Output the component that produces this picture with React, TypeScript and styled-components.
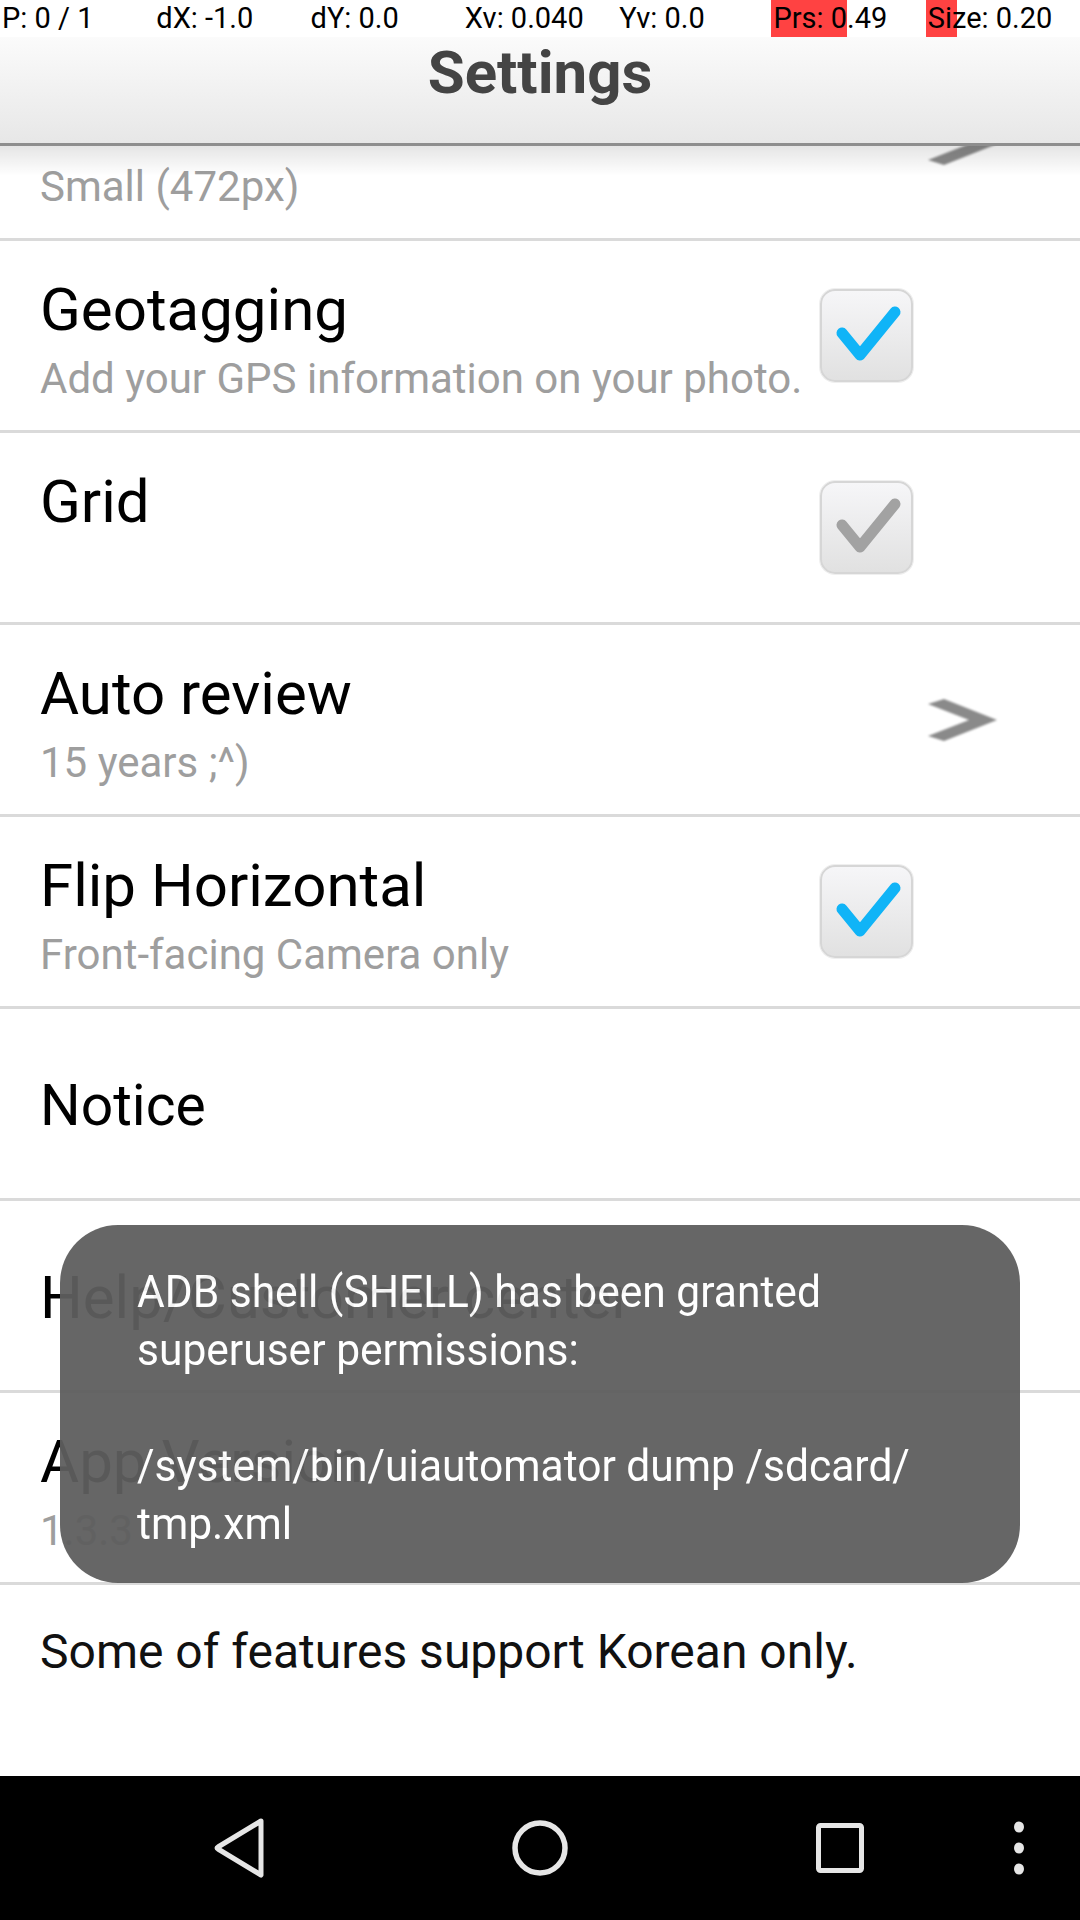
import React from "react";
import styled, { createGlobalStyle } from "styled-components";

const GlobalStyle = createGlobalStyle`
  html, body {
    margin: 0;
    padding: 0;
    background: #ffffff;
  }
  body {
    font-family: Roboto, "Noto Sans", "Liberation Sans", sans-serif;
    width: 1080px;
    height: 1920px;
    overflow: hidden;
  }
  #root {
    width: 1080px;
    height: 1920px;
  }
`;

const Phone = styled.div`
  position: relative;
  width: 1080px;
  height: 1920px;
  display: flex;
  flex-direction: column;
  background: #ffffff;
  overflow: hidden;
`;

/* ---------- debug pointer status line ---------- */
const StatusBar = styled.div`
  flex-shrink: 0;
  height: 37px;
  display: grid;
  grid-template-columns: repeat(7, 1fr);
  background: #ffffff;
`;

const StatusCell = styled.div`
  position: relative;
  height: 37px;
  padding-left: 2px;
  font-size: 29px;
  line-height: 37px;
  color: #000000;
  white-space: nowrap;
`;

const StatusFill = styled.div`
  position: absolute;
  left: 0;
  top: 0;
  bottom: 0;
  background: #ff4242;
`;

const StatusText = styled.span`
  position: relative;
`;

/* ---------- screen ---------- */
const Screen = styled.div`
  position: relative;
  flex: 1;
  overflow: hidden;
  display: flex;
  flex-direction: column;
`;

const Header = styled.div`
  position: absolute;
  top: 0;
  left: 0;
  right: 0;
  z-index: 2;
  height: 106px;
  box-sizing: content-box;
  background: linear-gradient(#fbfbfb, #e7e7e7);
  border-bottom: 3px solid #8e8e8e;
  text-align: center;

  &::after {
    content: "";
    position: absolute;
    left: 0;
    right: 0;
    top: 109px;
    height: 30px;
    background: linear-gradient(rgba(0, 0, 0, 0.1), rgba(0, 0, 0, 0));
  }
`;

const HeaderTitle = styled.div`
  padding-top: 1px;
  font-size: 60px;
  line-height: 70px;
  font-weight: 700;
  color: #444444;
`;

const List = styled.div`
  flex: 1;
  display: flex;
  flex-direction: column;
  padding-top: 9px;
`;

const Row = styled.div`
  flex-shrink: 0;
  height: 192px;
  box-sizing: border-box;
  border-top: 3px solid #dadada;
  padding-left: 40px;
  display: flex;
  align-items: center;
`;

const TextBlock = styled.div`
  flex: 1;
  min-width: 0;
  margin-top: 5px;
  white-space: nowrap;
`;

const Title = styled.div<{ $size: number }>`
  font-size: ${(p) => p.$size}px;
  line-height: 70px;
  color: #000000;
`;

const Summary = styled.div`
  margin-top: 10px;
  font-size: 42px;
  line-height: 47px;
  color: #9e9e9e;
`;

const Footer = styled.div`
  flex: 1;
  border-top: 3px solid #dadada;
  padding: 39px 0 0 40px;
  font-size: 48px;
  line-height: 56px;
  color: #111111;
`;

const CheckBox = styled.div`
  flex-shrink: 0;
  width: 93px;
  height: 93px;
  margin-right: 167px;
  box-sizing: border-box;
  border: 2px solid #d6d6d6;
  border-radius: 15px;
  background: linear-gradient(#f6f6f8, #e1e1e1);
  box-shadow: 0 0 0 1px #efefef;
  display: flex;
  align-items: center;
  justify-content: center;
`;

const CheckMark = styled.svg`
  width: 93px;
  height: 93px;
  flex-shrink: 0;
  margin: -4px 0 0 -4px;
`;

const ArrowIcon = styled.svg`
  flex-shrink: 0;
  width: 75px;
  height: 46px;
  margin-right: 80px;
  filter: blur(0.9px);
`;

/* ---------- toast ---------- */
const Toast = styled.div`
  position: absolute;
  left: 60px;
  top: 1225px;
  width: 960px;
  height: 358px;
  box-sizing: border-box;
  padding: 38px 0 0 77px;
  border-radius: 58px;
  background: #5e5e5e;
  opacity: 0.95;
  z-index: 5;
`;

const ToastText = styled.div`
  color: #ffffff;
  font-size: 45px;
  line-height: 58px;
  white-space: pre;
  transform: scaleX(0.945);
  transform-origin: left top;
`;

/* ---------- navigation bar ---------- */
const NavBar = styled.div`
  flex-shrink: 0;
  height: 144px;
  background: #000000;
  display: flex;
  align-items: center;
  padding-left: 210px;
`;

const NavGroup = styled.div`
  display: flex;
  align-items: center;
  gap: 240px;
`;

const NavButton = styled.svg`
  width: 60px;
  height: 60px;
  flex-shrink: 0;
`;

const MenuButton = styled.svg`
  width: 20px;
  height: 60px;
  flex-shrink: 0;
  margin-left: auto;
  margin-right: 51px;
`;

type Setting = {
  title: string;
  titleSize?: number;
  summary?: string;
  keepSummaryLine?: boolean;
  widget?: "check-on" | "check-off" | "arrow";
};

const settings: Setting[] = [
  { title: "Picture Size", summary: "Small (472px)", widget: "arrow" },
  { title: "Geotagging", summary: "Add your GPS information on your photo.", widget: "check-on" },
  { title: "Grid", keepSummaryLine: true, widget: "check-off" },
  { title: "Auto review", summary: "15 years ;^)", widget: "arrow" },
  { title: "Flip Horizontal", summary: "Front-facing Camera only", widget: "check-on" },
  { title: "Notice", titleSize: 57 },
  { title: "Help/Customer center" },
  { title: "App Version", summary: "1.3.3" },
];

const status = [
  { text: "P: 0 / 1" },
  { text: "dX: -1.0" },
  { text: "dY: 0.0" },
  { text: "Xv: 0.040" },
  { text: "Yv: 0.0" },
  { text: "Prs: 0.49", bar: 0.49 },
  { text: "Size: 0.20", bar: 0.2 },
];

function Check({ on }: { on: boolean }) {
  return (
    <CheckMark viewBox="0 0 93 93">
      <polyline
        points="24,46 42,68 77,25"
        fill="none"
        stroke={on ? "#10b4f7" : "#a2a2a2"}
        strokeWidth="11"
        strokeLinecap="round"
        strokeLinejoin="round"
      />
    </CheckMark>
  );
}

function Arrow() {
  return (
    <ArrowIcon viewBox="0 0 75 46">
      <polygon points="3,7 19,2 72,23 19,44 3,39 44,23" fill="#8a8a8a" />
    </ArrowIcon>
  );
}

function Widget({ kind }: { kind?: Setting["widget"] }) {
  if (kind === "arrow") return <Arrow />;
  if (kind === "check-on" || kind === "check-off")
    return (
      <CheckBox>
        <Check on={kind === "check-on"} />
      </CheckBox>
    );
  return null;
}

export default function App() {
  return (
    <Phone>
      <GlobalStyle />
      <StatusBar>
        {status.map((s) => (
          <StatusCell key={s.text}>
            {s.bar !== undefined && <StatusFill style={{ width: `${s.bar * 100}%` }} />}
            <StatusText>{s.text}</StatusText>
          </StatusCell>
        ))}
      </StatusBar>

      <Screen>
        <Header>
          <HeaderTitle>Settings</HeaderTitle>
        </Header>
        <List>
          {settings.map((s) => (
            <Row key={s.title}>
              <TextBlock>
                <Title $size={s.titleSize ?? 60}>{s.title}</Title>
                {s.summary && <Summary>{s.summary}</Summary>}
                {s.keepSummaryLine && <Summary>{"\u00a0"}</Summary>}
              </TextBlock>
              <Widget kind={s.widget} />
            </Row>
          ))}
          <Footer>Some of features support Korean only.</Footer>
        </List>
      </Screen>

      <NavBar>
        <NavGroup>
          <NavButton viewBox="0 0 60 60">
            <path
              d="M51 3 L8 29 Q6 30 8 31 L51 57 Z"
              fill="none"
              stroke="#e6e6e6"
              strokeWidth="5"
              strokeLinejoin="round"
            />
          </NavButton>
          <NavButton viewBox="0 0 60 60">
            <circle cx="30" cy="30" r="25" fill="none" stroke="#e6e6e6" strokeWidth="5.5" />
          </NavButton>
          <NavButton viewBox="0 0 60 60">
            <rect x="8.5" y="7.5" width="43" height="45" rx="2" fill="none" stroke="#e6e6e6" strokeWidth="5" />
          </NavButton>
        </NavGroup>
        <MenuButton viewBox="0 0 20 60">
          <ellipse cx="10" cy="9" rx="5" ry="5.5" fill="#e6e6e6" />
          <ellipse cx="10" cy="30" rx="5" ry="5.5" fill="#e6e6e6" />
          <ellipse cx="10" cy="51" rx="5" ry="5.5" fill="#e6e6e6" />
        </MenuButton>
      </NavBar>

      <Toast>
        <ToastText>
          {"ADB shell (SHELL) has been granted\nsuperuser permissions:\n\n/system/bin/uiautomator dump /sdcard/\ntmp.xml"}
        </ToastText>
      </Toast>
    </Phone>
  );
}
